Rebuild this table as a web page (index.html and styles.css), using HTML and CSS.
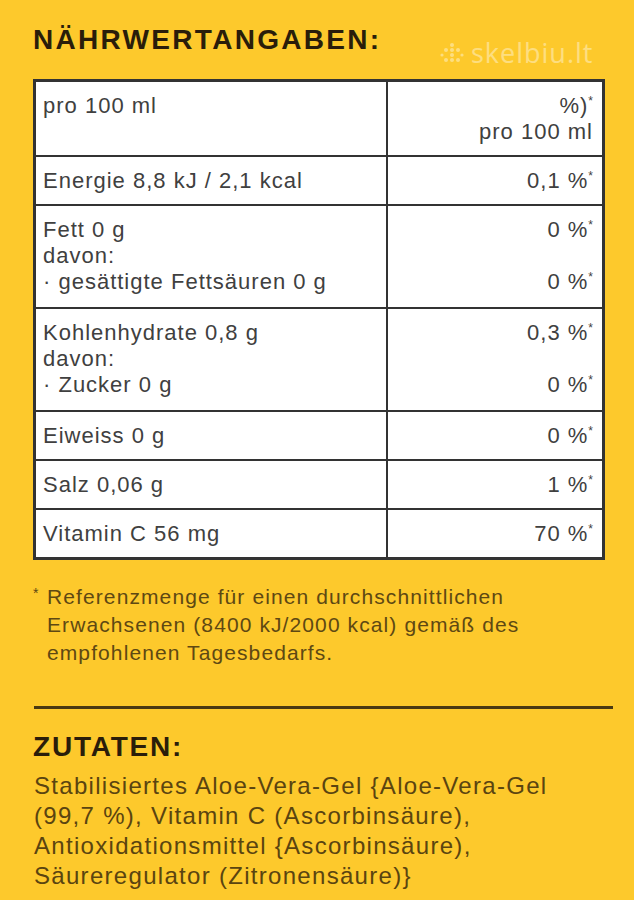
FILE: index.html
```html
<!DOCTYPE html>
<html lang="de">
<head>
<meta charset="utf-8">
<title>Nährwertangaben</title>
<link rel="stylesheet" href="styles.css">
</head>
<body>
<div class="page">
  <h1 class="title">NÄHRWERTANGABEN:</h1>
  <div class="watermark">
    <svg class="wm-icon" width="26" height="22" viewBox="0 0 26 22">
      <g fill="#fff">
        <circle cx="13" cy="3" r="2"/>
        <circle cx="7" cy="8" r="2"/><circle cx="13" cy="8" r="2"/><circle cx="19" cy="8" r="2"/>
        <circle cx="3" cy="13" r="1.6"/><circle cx="13" cy="13" r="2"/><circle cx="23" cy="13" r="1.6"/>
        <circle cx="7" cy="18" r="2"/><circle cx="13" cy="18" r="2"/><circle cx="19" cy="18" r="2"/>
      </g>
    </svg>
    <span class="wm-text">skelbiu.lt</span>
  </div>

  <div class="table">
    <div class="row">
      <div class="cell">pro 100 ml</div>
      <div class="cell val">%)<sup>*</sup><br>pro 100 ml</div>
    </div>
    <div class="row">
      <div class="cell">Energie 8,8 kJ / 2,1 kcal</div>
      <div class="cell val">0,1 %<sup>*</sup></div>
    </div>
    <div class="row multi">
      <div class="cell">Fett 0 g<br>davon:<br>· gesättigte Fettsäuren 0 g</div>
      <div class="cell val">0 %<sup>*</sup><br>&nbsp;<br>0 %<sup>*</sup></div>
    </div>
    <div class="row multi">
      <div class="cell">Kohlenhydrate 0,8 g<br>davon:<br>· Zucker 0 g</div>
      <div class="cell val">0,3 %<sup>*</sup><br>&nbsp;<br>0 %<sup>*</sup></div>
    </div>
    <div class="row">
      <div class="cell">Eiweiss 0 g</div>
      <div class="cell val">0 %<sup>*</sup></div>
    </div>
    <div class="row">
      <div class="cell">Salz 0,06 g</div>
      <div class="cell val">1 %<sup>*</sup></div>
    </div>
    <div class="row">
      <div class="cell">Vitamin C 56 mg</div>
      <div class="cell val">70 %<sup>*</sup></div>
    </div>
  </div>

  <div class="footnote">
    <span class="fn-mark">*</span>
    <p class="fn-text">Referenzmenge für einen durchschnittlichen<br>Erwachsenen (8400 kJ/2000 kcal) gemäß des<br>empfohlenen Tagesbedarfs.</p>
  </div>

  <hr class="divider">

  <h2 class="title title-2">ZUTATEN:</h2>
  <p class="ingredients">Stabilisiertes Aloe-Vera-Gel {Aloe-Vera-Gel<br>(99,7 %), Vitamin C (Ascorbinsäure),<br>Antioxidationsmittel {Ascorbinsäure),<br>Säureregulator (Zitronensäure)}</p>
</div>
</body>
</html>
```

FILE: styles.css
```css
html, body {
  margin: 0;
  padding: 0;
}
body {
  background: #fdc92c;
  font-family: "Liberation Sans", Arial, sans-serif;
  width: 634px;
  height: 900px;
  overflow: hidden;
}
.page {
  position: relative;
  padding: 24px 0 0 33px;
}
.title {
  margin: 0;
  font-size: 28px;
  line-height: 32px;
  font-weight: bold;
  letter-spacing: 2.3px;
  color: #2a1d0a;
}
.watermark {
  position: absolute;
  left: 439px;
  top: 38px;
  display: flex;
  align-items: center;
  gap: 6px;
  opacity: 0.4;
}
.wm-text {
  color: #fff;
  font-family: "Open Sans", "DejaVu Sans", sans-serif;
  font-size: 27px;
  line-height: 30px;
  letter-spacing: 1px;
}
.table {
  margin-top: 23px;
  width: 566px;
  border: 3px solid #333;
  background: #fff;
}
.row {
  display: grid;
  grid-template-columns: 350px 1fr;
  border-top: 2px solid #333;
}
.row:first-child {
  border-top: none;
}
.cell {
  padding: 11px 7px 10px 7px;
  font-size: 22px;
  line-height: 26px;
  letter-spacing: 1px;
  color: #404040;
}
.multi .cell {
  padding-bottom: 12px;
}
.val {
  border-left: 2px solid #333;
  text-align: right;
  padding-right: 9px;
}
.val sup {
  font-size: 12px;
  line-height: 0;
  vertical-align: 8px;
  letter-spacing: 0;
}
.footnote {
  margin-top: 23px;
  display: flex;
  color: #5e4813;
  font-size: 21px;
  line-height: 28px;
  letter-spacing: 1.1px;
}
.fn-mark {
  width: 14px;
  font-size: 14px;
  line-height: 20px;
}
.fn-text {
  margin: 0;
}
.divider {
  margin: 39px 0 0 1px;
  width: 579px;
  height: 3px;
  border: none;
  background: #4a3912;
}
.title-2 {
  margin-top: 22px;
  letter-spacing: 1.8px;
}
.ingredients {
  margin: 8px 0 0 1px;
  font-size: 24px;
  line-height: 30px;
  letter-spacing: 1.3px;
  color: #5a4410;
}
```
